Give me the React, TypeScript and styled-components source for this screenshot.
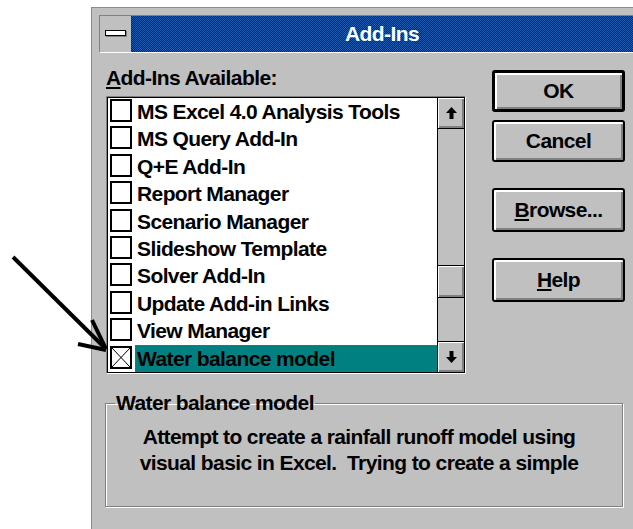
import styled, { createGlobalStyle } from 'styled-components';

const GlobalStyle = createGlobalStyle`
  body {
    margin: 0;
    background: #ffffff;
    font-family: 'Liberation Sans', Arial, sans-serif;
    font-weight: 700;
    font-size: 21px;
    letter-spacing: -0.6px;
    color: #000000;
  }
`;

interface AddIn {
  name: string;
  checked: boolean;
}

const addIns: AddIn[] = [
  { name: 'MS Excel 4.0 Analysis Tools', checked: false },
  { name: 'MS Query Add-In', checked: false },
  { name: 'Q+E Add-In', checked: false },
  { name: 'Report Manager', checked: false },
  { name: 'Scenario Manager', checked: false },
  { name: 'Slideshow Template', checked: false },
  { name: 'Solver Add-In', checked: false },
  { name: 'Update Add-in Links', checked: false },
  { name: 'View Manager', checked: false },
  { name: 'Water balance model', checked: true },
];

const selectedIndex = 9;

const StyledPage = styled.div`
  position: relative;
  width: 633px;
  height: 529px;
  overflow: hidden;
  box-sizing: border-box;
  padding: 7px 0 0 91px;
`;

const StyledDialog = styled.div`
  height: 100%;
  box-sizing: border-box;
  border-top: 1px solid #8c8c8c;
  border-left: 1px solid #8c8c8c;
  background: #c0c0c0;
  padding: 7px 0 0 7px;
`;

const StyledTitleRow = styled.div`
  display: flex;
  height: 36px;
  border-top: 1px solid #808080;
  border-left: 1px solid #808080;
  border-bottom: 1px solid #ffffff;
`;

const StyledSysBox = styled.div`
  width: 31px;
  display: flex;
  align-items: center;
  justify-content: center;
  background: #c0c0c0;
`;

const StyledSysBar = styled.div`
  width: 21px;
  height: 6px;
  box-sizing: border-box;
  border: 1px solid #000000;
  background: #ffffff;
  box-shadow: 1px 1px 0 #808080;
  margin-top: -3px;
`;

const StyledCaption = styled.div`
  flex: 1;
  text-align: center;
  line-height: 36px;
  color: #ffffff;
  background-color: #0d3e8f;
  background-image: conic-gradient(#1a5cb0 25%, #00206e 0 50%, #1a5cb0 0 75%, #00206e 0);
  background-size: 2px 2px;
`;

const StyledBody = styled.div`
  padding: 13px 0 0 7px;
`;

const StyledTop = styled.div`
  display: grid;
  grid-template-columns: 360px 133px;
  column-gap: 26px;
  align-items: start;
`;

const StyledLabel = styled.div`
  line-height: 24px;
  margin-bottom: 6px;
`;

const StyledListFrame = styled.div`
  width: 360px;
  box-sizing: border-box;
  border: 1px solid;
  border-color: #808080 #ffffff #ffffff #808080;
`;

const StyledListInner = styled.div`
  display: flex;
  height: 274px;
  border: 1px solid #000000;
  background: #ffffff;
`;

const StyledRows = styled.div`
  flex: 1;
  display: flex;
  flex-direction: column;
`;

const StyledRow = styled.div`
  height: 27.4px;
  display: flex;
  align-items: flex-start;
  gap: 3px;
  padding-left: 2px;
`;

const StyledCheck = styled.div`
  width: 22px;
  height: 23px;
  margin-top: 1px;
  flex-shrink: 0;
  box-sizing: border-box;
  border: 2px solid #000000;
  background: #ffffff;

  svg {
    display: block;
  }
`;

const StyledItemName = styled.div<{ $selected: boolean }>`
  height: 27.4px;
  box-sizing: border-box;
  padding: 1px 4px 0 2px;
  line-height: 25.4px;
  white-space: nowrap;
  ${props =>
    props.$selected &&
    `
    flex: 1;
    background: #008080;
    outline: 1px dotted #ff2020;
    outline-offset: -1px;
  `}
`;

const StyledScrollBar = styled.div`
  width: 27px;
  box-sizing: border-box;
  border-left: 1px solid #000000;
  display: flex;
  flex-direction: column;
  background: #c0c0c0;
`;

const bevel = `
  background: #c0c0c0;
  box-shadow: inset 1px 1px 0 #ffffff, inset -2px -2px 0 #808080;
`;

const StyledScrollButton = styled.div<{ $edge: 'top' | 'bottom' }>`
  height: 31px;
  box-sizing: border-box;
  display: flex;
  align-items: center;
  justify-content: center;
  ${bevel}
  ${props =>
    props.$edge === 'top' ? 'border-bottom: 1px solid #000;' : 'border-top: 1px solid #000;'}
`;

const StyledTrack = styled.div<{ $grow: number }>`
  flex: ${props => props.$grow} 1 0;
`;

const StyledThumb = styled.div`
  height: 33px;
  box-sizing: border-box;
  border-top: 1px solid #000000;
  border-bottom: 1px solid #000000;
  ${bevel}
`;

const StyledButtons = styled.div`
  display: flex;
  flex-direction: column;
`;

const StyledButton = styled.button<{ $gap: number; $height: number; $default?: boolean }>`
  margin-top: ${props => props.$gap}px;
  height: ${props => props.$height}px;
  width: 133px;
  box-sizing: border-box;
  padding: 0;
  font: inherit;
  letter-spacing: inherit;
  color: #000000;
  border: ${props => (props.$default ? 3 : 2)}px solid #000000;
  border-radius: 3px;
  background: #c0c0c0;
  box-shadow: inset 2px 2px 0 #ffffff, inset -2px -2px 0 #808080;

  u {
    text-underline-offset: 2px;
  }
`;

const StyledGroup = styled.fieldset`
  margin: 17px 0 0 -1px;
  width: 518px;
  height: 116px;
  box-sizing: border-box;
  min-width: 0;
  padding: 0 10px 0 0;
  border: 1px solid #808080;
  box-shadow: 1px 1px 0 #ffffff, inset 1px 1px 0 #ffffff;
`;

const StyledLegend = styled.legend`
  margin-left: 9px;
  padding: 0 1px;
  line-height: 24px;
`;

const StyledDescription = styled.div`
  margin-top: 9px;
  text-align: center;
  line-height: 26px;
  white-space: pre;
`;

const StyledPointer = styled.svg`
  position: absolute;
  left: 0;
  top: 0;
  pointer-events: none;
`;

const ArrowGlyph = ({ down }: { down?: boolean }) => (
  <svg width="11" height="12" viewBox="0 0 11 12">
    <path
      d="M5.5 0 L11 6 H7.5 V12 H3.5 V6 H0 Z"
      fill="#000"
      transform={down ? 'rotate(180 5.5 6)' : undefined}
    />
  </svg>
);

const CheckBox = ({ checked }: { checked: boolean }) => (
  <StyledCheck>
    {checked && (
      <svg width="18" height="19" viewBox="0 0 18 19">
        <path d="M0 0 L18 19 M18 0 L0 19" stroke="#000" strokeWidth="1" />
      </svg>
    )}
  </StyledCheck>
);

const App = (): JSX.Element => {
  const selected = addIns[selectedIndex];

  return (
    <>
      <GlobalStyle />
      <StyledPage>
        <StyledDialog>
          <StyledTitleRow>
            <StyledSysBox>
              <StyledSysBar />
            </StyledSysBox>
            <StyledCaption>Add-Ins</StyledCaption>
          </StyledTitleRow>

          <StyledBody>
            <StyledTop>
              <div>
                <StyledLabel>
                  <u>A</u>dd-Ins Available:
                </StyledLabel>
                <StyledListFrame>
                  <StyledListInner>
                    <StyledRows>
                      {addIns.map((item, i) => (
                        <StyledRow key={item.name}>
                          <CheckBox checked={item.checked} />
                          <StyledItemName $selected={i === selectedIndex}>{item.name}</StyledItemName>
                        </StyledRow>
                      ))}
                    </StyledRows>
                    <StyledScrollBar>
                      <StyledScrollButton $edge="top">
                        <ArrowGlyph />
                      </StyledScrollButton>
                      <StyledTrack $grow={135} />
                      <StyledThumb />
                      <StyledTrack $grow={43} />
                      <StyledScrollButton $edge="bottom">
                        <ArrowGlyph down />
                      </StyledScrollButton>
                    </StyledScrollBar>
                  </StyledListInner>
                </StyledListFrame>
              </div>

              <StyledButtons>
                <StyledButton $gap={4} $height={42} $default>
                  OK
                </StyledButton>
                <StyledButton $gap={8} $height={42}>
                  Cancel
                </StyledButton>
                <StyledButton $gap={26} $height={44}>
                  <u>B</u>rowse...
                </StyledButton>
                <StyledButton $gap={26} $height={44}>
                  <u>H</u>elp
                </StyledButton>
              </StyledButtons>
            </StyledTop>

            <StyledGroup>
              <StyledLegend>{selected.name}</StyledLegend>
              <StyledDescription>
                {'Attempt to create a rainfall runoff model using\nvisual basic in Excel.  Trying to create a simple'}
              </StyledDescription>
            </StyledGroup>
          </StyledBody>
        </StyledDialog>

        <StyledPointer width="633" height="529" viewBox="0 0 633 529">
          <g stroke="#000" strokeWidth="4" fill="none" strokeLinecap="butt">
            <path d="M13 257 L106 349" />
            <path d="M92 320 L106 349" />
            <path d="M78 344 L106 350" />
          </g>
        </StyledPointer>
      </StyledPage>
    </>
  );
};

export default App;
